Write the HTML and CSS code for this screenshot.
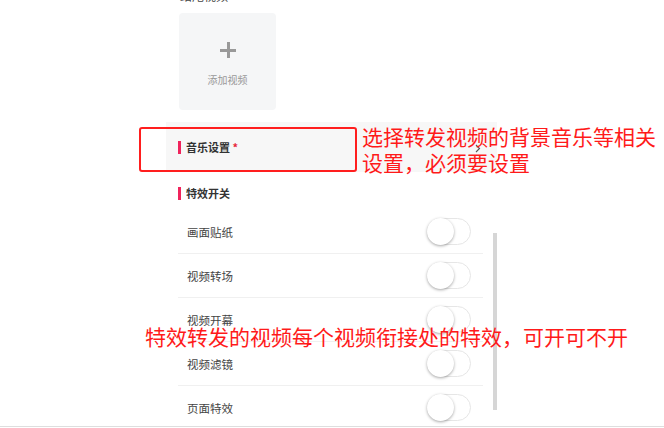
FILE: index.html
```html
<!DOCTYPE html>
<html lang="zh-CN">
  <head>
    <meta charset="UTF-8" />
    <meta name="viewport" content="width=device-width, initial-scale=1.0" />
    <title>转发视频设置</title>
    <link rel="stylesheet" href="styles.css">
  </head>
  <body>
    <div class="page">
      <div class="panel">
        <div class="top-label">结尾视频</div>
        <div class="upload">
          <span class="plus"></span>
          <span class="upload-text">添加视频</span>
        </div>

        <div class="music-row">
          <span class="section-title">音乐设置 <em>*</em></span>
          <svg class="chevron" width="6" height="9" viewBox="0 0 6 9">
            <path d="M1 1l3.5 3.5L1 8" fill="none" stroke="#555" stroke-width="1.1" />
          </svg>
        </div>

        <div class="section-head">
          <span class="section-title">特效开关</span>
        </div>

        <div class="switch-list">
          <div class="switch-row"><span>画面贴纸</span><span class="toggle"></span></div>
          <div class="switch-row"><span>视频转场</span><span class="toggle"></span></div>
          <div class="switch-row"><span>视频开幕</span><span class="toggle"></span></div>
          <div class="switch-row"><span>视频滤镜</span><span class="toggle"></span></div>
          <div class="switch-row"><span>页面特效</span><span class="toggle"></span></div>
        </div>

        <div class="scrollbar"></div>
      </div>

      <div class="mark-box"></div>
      <div class="note note-music">选择转发视频的背景音乐等相关<br>设置，必须要设置</div>
      <div class="note note-effect">特效转发的视频每个视频衔接处的特效，可开可不开</div>
    </div>
  </body>
</html>
```

FILE: styles.css
```css
body {
  margin: 0;
  background: #fff;
  font-family: "Noto Sans CJK SC", "Noto Sans", sans-serif;
  color: #333;
}
.page {
  position: relative;
  width: 664px;
  height: 426px;
  overflow: hidden;
  border-bottom: 1px solid #dedede;
}
.panel {
  position: relative;
  width: 331px;
  height: 426px;
  margin-left: 166px;
}
.top-label {
  margin: -13px 0 0 14px;
  height: 17px;
  font-size: 12px;
  line-height: 17px;
  color: #444;
}
.upload {
  width: 97px;
  height: 97px;
  margin: 9px 0 0 13px;
  background: #f5f6f7;
  border-radius: 4px;
  display: flex;
  flex-direction: column;
  align-items: center;
}
.plus {
  position: relative;
  width: 16px;
  height: 16px;
  margin-top: 29px;
}
.plus::before,
.plus::after {
  content: "";
  position: absolute;
  background: #999;
}
.plus::before {
  left: 0;
  top: 7px;
  width: 16px;
  height: 3px;
}
.plus::after {
  left: 7px;
  top: 0;
  width: 3px;
  height: 16px;
}
.upload-text {
  margin-top: 15px;
  font-size: 10px;
  line-height: 14px;
  color: #999;
}
.music-row {
  height: 50px;
  margin-top: 12px;
  padding: 0 16px 0 12px;
  background: #f7f7f7;
  display: flex;
  align-items: center;
  justify-content: space-between;
}
.section-title {
  border-left: 3px solid #f0245c;
  padding-left: 5px;
  font-size: 11px;
  font-weight: bold;
  line-height: 13px;
  color: #333;
}
.section-title em {
  font-style: normal;
  color: #e8263b;
}
.chevron {
  margin-top: 3px;
}
.section-head {
  height: 38px;
  box-sizing: border-box;
  padding: 15px 0 0 12px;
  display: flex;
  align-items: flex-start;
}
.switch-list {
  margin: 0 14px 0 12px;
}
.switch-row {
  height: 43px;
  border-bottom: 1px solid #f0f0f0;
  padding: 0 12px 0 9px;
  display: flex;
  align-items: center;
  justify-content: space-between;
  font-size: 11.5px;
  color: #444;
}
.switch-row:last-child {
  border-bottom: none;
}
.toggle {
  position: relative;
  width: 42px;
  height: 25px;
  border: 1px solid #e6e6e6;
  border-radius: 14px;
  background: #fff;
}
.toggle::after {
  content: "";
  position: absolute;
  left: -1px;
  top: -1px;
  width: 27px;
  height: 27px;
  border-radius: 50%;
  background: #fff;
  box-shadow: 0 1px 3px rgba(0, 0, 0, 0.35);
}
.scrollbar {
  position: absolute;
  left: 327px;
  top: 246px;
  width: 4px;
  height: 177px;
  background: #d6d6d6;
}
.mark-box {
  position: absolute;
  left: 139px;
  top: 127px;
  width: 214px;
  height: 41px;
  border: 2px solid #ff1e1e;
  border-radius: 3px;
}
.note {
  position: absolute;
  font-size: 21px;
  line-height: 26px;
  color: #ff1a1a;
  white-space: nowrap;
}
.note-music {
  left: 362px;
  top: 123px;
}
.note-effect {
  left: 145px;
  top: 323px;
}
```
